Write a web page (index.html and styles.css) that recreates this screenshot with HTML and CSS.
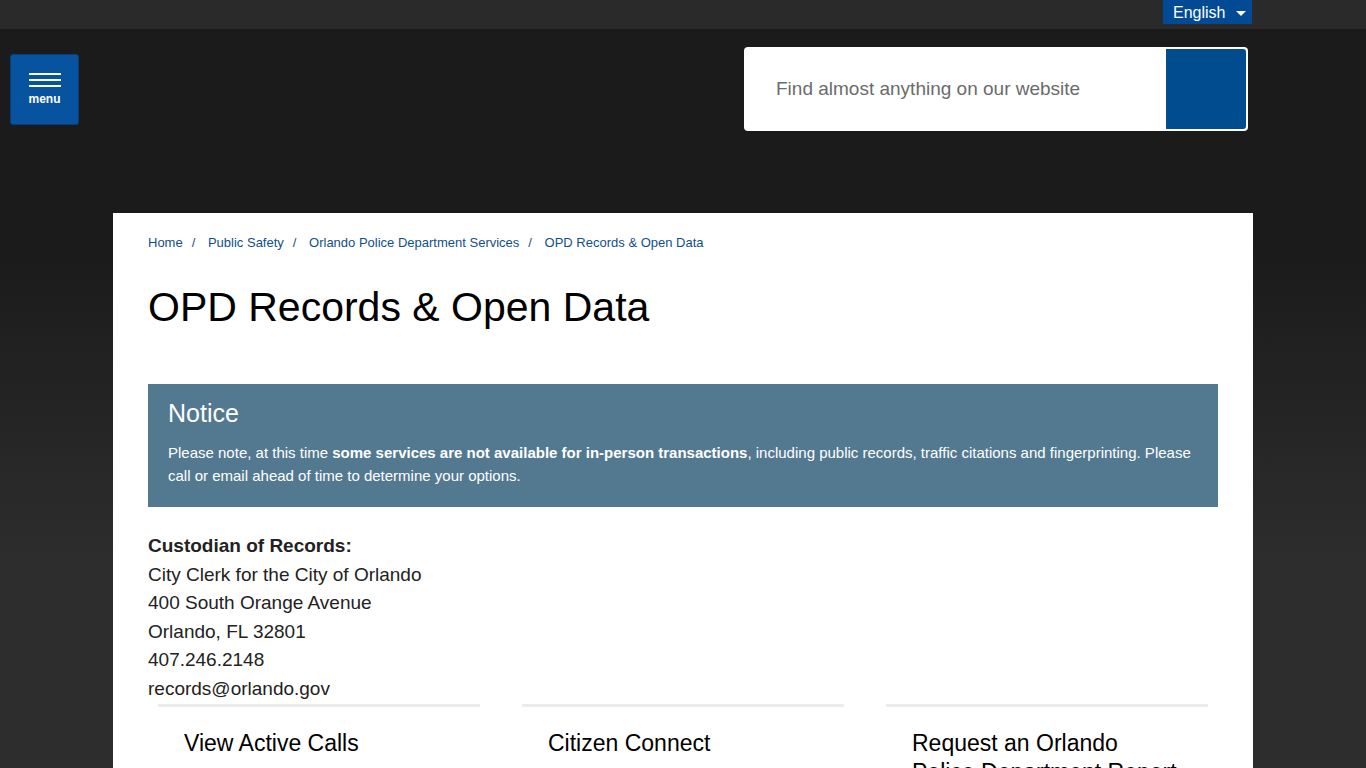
FILE: index.html
```
<!DOCTYPE html>
<html lang="en">
<head>
    <meta charset="UTF-8">
    <meta name="viewport" content="width=device-width, initial-scale=1.0">
    <title>OPD Records &amp; Open Data</title>
    <link rel="stylesheet" href="styles.css">
</head>
<body>
    <div class="topbar">
        <div class="topbar-inner">
            <button class="lang-button">English <span class="caret"></span></button>
        </div>
    </div>

    <header class="header">
        <button class="menu-button">
            <span class="menu-lines">
                <span></span><span></span><span></span>
            </span>
            <span class="menu-text">menu</span>
        </button>
        <form class="search">
            <input type="text" class="search-input" placeholder="Find almost anything on our website">
            <button type="button" class="search-button" aria-label="Search"></button>
        </form>
    </header>

    <main class="container">
        <nav class="breadcrumb">
            <a href="#">Home</a><span class="sep">/</span>
            <a href="#">Public Safety</a><span class="sep">/</span>
            <a href="#">Orlando Police Department Services</a><span class="sep">/</span>
            <a href="#">OPD Records &amp; Open Data</a>
        </nav>

        <h1 class="page-title">OPD Records &amp; Open Data</h1>

        <div class="notice">
            <h2>Notice</h2>
            <p>Please note, at this time <strong>some services are not available for in-person transactions</strong>, including public records, traffic citations and fingerprinting. Please call or email ahead of time to determine your options.</p>
        </div>

        <div class="custodian">
            <strong>Custodian of Records:</strong><br>
            City Clerk for the City of Orlando<br>
            400 South Orange Avenue<br>
            Orlando, FL 32801<br>
            407.246.2148<br>
            records@orlando.gov
        </div>

        <div class="cards">
            <a href="#" class="card">
                <h3>View Active Calls</h3>
            </a>
            <a href="#" class="card">
                <h3>Citizen Connect</h3>
            </a>
            <a href="#" class="card">
                <h3>Request an Orlando Police Department Report</h3>
            </a>
        </div>
    </main>
</body>
</html>
```

FILE: styles.css
```
body {
    font-family: "Liberation Sans", Arial, sans-serif;
    margin: 0;
    color: #222;
    background: linear-gradient(to bottom, #1b1b1b 0, #1b1b1b 250px, #2d2d2d 560px);
    min-height: 100vh;
}
.topbar {
    background: #2a2a2a;
    height: 29px;
}
.topbar-inner {
    max-width: 1140px;
    margin: 0 auto;
    display: flex;
    justify-content: flex-end;
}
.lang-button {
    font-family: inherit;
    font-size: 16px;
    color: #fff;
    background: #024b94;
    border: none;
    height: 24px;
    width: 89px;
    margin-right: 1px;
    padding: 1px 0 0 10px;
    display: flex;
    align-items: center;
    gap: 11px;
    cursor: pointer;
}
.caret {
    width: 0;
    height: 0;
    border-left: 5px solid transparent;
    border-right: 5px solid transparent;
    border-top: 5px solid #fff;
    margin-top: 1px;
}
.header {
    height: 184px;
    display: flex;
    justify-content: space-between;
    align-items: flex-start;
    padding: 0 118px 0 10px;
}
.menu-button {
    margin-top: 25px;
    width: 69px;
    height: 71px;
    background: #0853a0;
    border: 1px solid #073f7c;
    border-radius: 3px;
    display: flex;
    flex-direction: column;
    align-items: center;
    padding: 18px 0 0;
    cursor: pointer;
}
.menu-lines {
    display: flex;
    flex-direction: column;
    gap: 4px;
}
.menu-lines span {
    display: block;
    width: 32px;
    height: 2px;
    background: #fff;
}
.menu-text {
    color: #fff;
    font-family: inherit;
    font-size: 12px;
    font-weight: bold;
    margin-top: 5px;
}
.search {
    margin-top: 18px;
    width: 504px;
    height: 84px;
    box-sizing: border-box;
    background: #fff;
    border-radius: 4px;
    padding: 2px;
    display: flex;
}
.search-input {
    flex: 1;
    border: none;
    outline: none;
    font-family: inherit;
    font-size: 19px;
    padding: 0 0 0 30px;
    color: #333;
    background: transparent;
}
.search-input::placeholder {
    color: #6b6b6b;
}
.search-button {
    width: 80px;
    border: none;
    background: #004c8f;
    border-radius: 0 3px 3px 0;
    cursor: pointer;
}
.container {
    max-width: 1140px;
    margin: 0 auto;
    background: #fff;
    padding: 21px 35px 40px;
    box-sizing: border-box;
}
.breadcrumb {
    font-size: 13px;
    line-height: 18px;
}
.breadcrumb a {
    color: #0f4f8e;
    text-decoration: none;
}
.breadcrumb .sep {
    color: #0f4f8e;
    margin: 0 9px;
}
.page-title {
    font-size: 41px;
    font-weight: normal;
    color: #000;
    margin: 30px 0 0;
    line-height: 50px;
}
.notice {
    margin-top: 52px;
    background: #537990;
    color: #fff;
    padding: 14px 20px 20px;
}
.notice h2 {
    font-size: 25px;
    font-weight: normal;
    margin: 0 0 13px;
    line-height: 30px;
}
.notice p {
    margin: 0;
    font-size: 15px;
    line-height: 23px;
}
.custodian {
    margin-top: 25px;
    font-size: 19px;
    line-height: 28.5px;
    color: #222;
}
.cards {
    display: grid;
    grid-template-columns: repeat(3, 1fr);
    gap: 42px;
    margin: 1px 10px 0;
}
.card {
    display: block;
    text-decoration: none;
    color: #000;
    border-top: 3px solid #ececec;
    padding: 22px 28px 20px 26px;
}
.card h3 {
    margin: 0;
    font-size: 23px;
    font-weight: normal;
    line-height: 29px;
}
```
